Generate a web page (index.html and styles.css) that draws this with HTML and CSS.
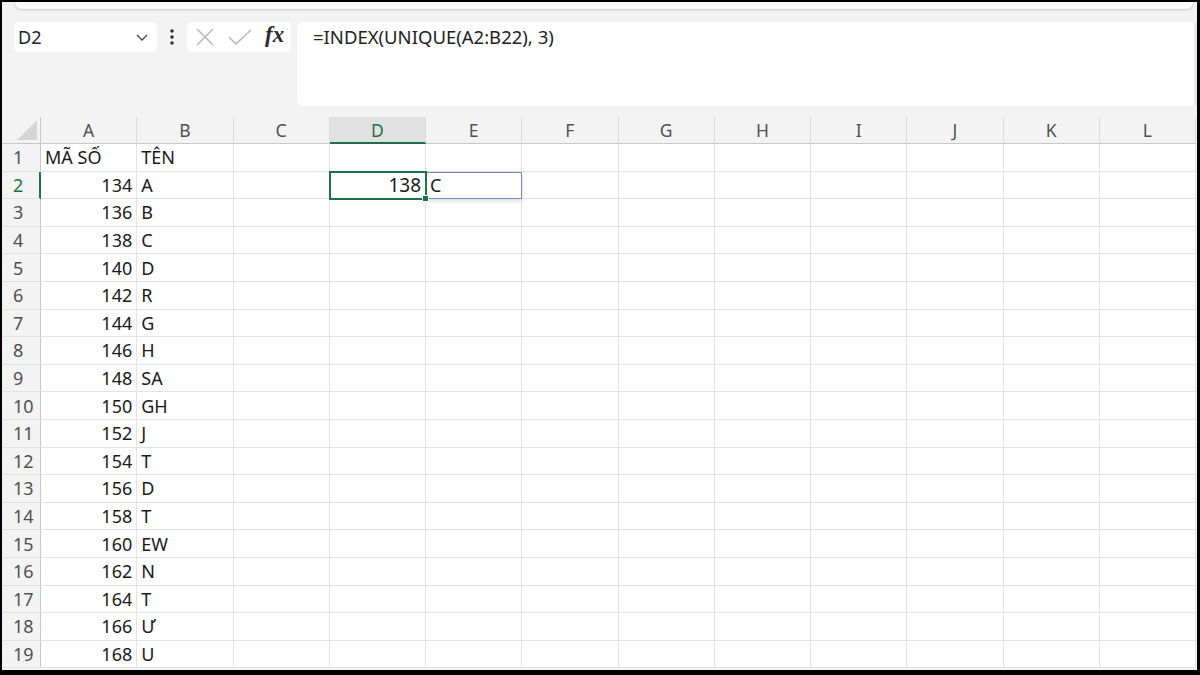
FILE: index.html
```html
<!DOCTYPE html>
<html lang="vi">
<head>
    <meta charset="UTF-8">
    <meta name="viewport" content="width=device-width, initial-scale=1.0">
    <title>Excel - INDEX UNIQUE</title>
    <link rel="stylesheet" href="styles.css">
</head>
<body>
    <div class="screen">
        <div class="app">
            <div class="searchbar"></div>

            <div class="formula-row">
                <div class="namebox">
                    <span>D2</span>
                    <svg class="chevron" width="12" height="7" viewBox="0 0 12 7">
                        <path d="M1 1 L6 6 L11 1" fill="none" stroke="#444" stroke-width="1.3"/>
                    </svg>
                </div>
                <div class="kebab">
                    <svg width="6" height="18" viewBox="0 0 6 18">
                        <circle cx="3" cy="3" r="1.8" fill="#333"/>
                        <circle cx="3" cy="9" r="1.8" fill="#333"/>
                        <circle cx="3" cy="15" r="1.8" fill="#333"/>
                    </svg>
                </div>
                <div class="fx-box">
                    <svg class="icon-x" width="18" height="18" viewBox="0 0 18 18">
                        <path d="M1 1 L17 17 M17 1 L1 17" stroke="#b4b4b4" stroke-width="1.4" fill="none"/>
                    </svg>
                    <svg class="icon-check" width="24" height="16" viewBox="0 0 24 16">
                        <path d="M1 8 L8 15 L23 1" stroke="#b4b4b4" stroke-width="1.4" fill="none"/>
                    </svg>
                    <span class="fx">fx</span>
                </div>
                <div class="formula">=INDEX(UNIQUE(A2:B22), 3)</div>
            </div>

            <div class="sheet" id="sheet">
                <div class="corner">
                    <svg width="20" height="20" viewBox="0 0 20 20">
                        <polygon points="20,0 20,20 0,20" fill="#d6d6d6"/>
                    </svg>
                </div>
            </div>
        </div>
    </div>

    <script>
let columns = ["A","B","C","D","E","F","G","H","I","J","K","L"];
let data = [
    ["MÃ SỐ", "TÊN"],
    [134, "A"], [136, "B"], [138, "C"], [140, "D"], [142, "R"],
    [144, "G"], [146, "H"], [148, "SA"], [150, "GH"], [152, "J"],
    [154, "T"], [156, "D"], [158, "T"], [160, "EW"], [162, "N"],
    [164, "T"], [166, "Ư"], [168, "U"]
];

function renderSheet() {
    let sheet = document.getElementById('sheet');

    columns.forEach(col => {
        let h = document.createElement('div');
        h.className = col === "D" ? "col-head active" : "col-head";
        h.innerText = col;
        sheet.appendChild(h);
    });

    data.forEach((row, r) => {
        let num = document.createElement('div');
        num.className = r === 1 ? "row-head active" : "row-head";
        num.innerText = r + 1;
        sheet.appendChild(num);

        columns.forEach((col, c) => {
            let cell = document.createElement('div');
            cell.className = "cell";
            let value = "";
            if (c < 2) value = row[c];
            if (r === 1 && col === "D") { value = 138; cell.classList.add("selected"); }
            if (r === 1 && col === "E") { value = "C"; cell.classList.add("spill"); }
            if (typeof value === "number") cell.classList.add("num");
            cell.innerText = value;
            sheet.appendChild(cell);
        });
    });
}

renderSheet();
    </script>
</body>
</html>
```

FILE: styles.css
```css
body {
    margin: 0;
    background-color: #000;
    font-family: "Noto Sans", "Open Sans", sans-serif;
}
.screen {
    width: 1200px;
    height: 675px;
    padding: 2px 3px 5px 2px;
    box-sizing: border-box;
    overflow: hidden;
}
.app {
    height: 100%;
    background-color: #f3f3f3;
    overflow: hidden;
}
.searchbar {
    height: 7px;
    margin: 0 4px 0 13px;
    background-color: #fbfbfb;
    border-radius: 0 0 8px 8px;
    box-shadow: 0 1px 3px rgba(0, 0, 0, 0.18);
}

/* name box + formula bar */
.formula-row {
    display: flex;
    align-items: flex-start;
    padding: 13px 0 0 12px;
}
.namebox {
    width: 143px;
    height: 30px;
    box-sizing: border-box;
    background-color: #fff;
    border-radius: 5px;
    display: flex;
    align-items: center;
    justify-content: space-between;
    padding: 0 9px 0 4px;
    font-size: 18px;
    color: #222;
}
.kebab {
    width: 30px;
    height: 30px;
    display: flex;
    align-items: center;
    justify-content: center;
}
.fx-box {
    width: 104px;
    height: 30px;
    box-sizing: border-box;
    background-color: #fff;
    border-radius: 5px;
    display: flex;
    align-items: center;
    padding: 0 6px 0 9px;
}
.icon-x {
    margin-right: 14px;
}
.icon-check {
    margin-right: 13px;
    margin-top: -1px;
}
.fx {
    font-family: "Liberation Serif", serif;
    font-style: italic;
    font-weight: bold;
    font-size: 23px;
    color: #2a2a2a;
    margin-top: -4px;
}
.formula {
    flex: 1;
    height: 84px;
    margin-left: 6px;
    background-color: #fff;
    border-radius: 6px 0 0 6px;
    border-right: 3px solid #e9e9e9;
    box-sizing: border-box;
    padding: 2px 16px;
    font-size: 18.5px;
    color: #222;
}

/* grid */
.sheet {
    display: grid;
    grid-template-columns: 39px repeat(12, 96.25px);
    grid-template-rows: 27px repeat(19, 27.6px);
    margin-top: 11px;
    font-size: 18px;
    color: #1a1a1a;
}
.corner {
    display: flex;
    align-items: flex-end;
    justify-content: flex-end;
    padding: 0 3px 3px 0;
    border-bottom: 1px solid #c8c8c8;
    border-right: 1px solid #c8c8c8;
}
.col-head {
    display: flex;
    align-items: center;
    justify-content: center;
    color: #505050;
    font-size: 17.5px;
    border-right: 1px solid #dcdcdc;
    border-bottom: 1px solid #c8c8c8;
}
.col-head.active {
    background-color: #e1e1e1;
    color: #1e7145;
    border-bottom: 2px solid #1e7145;
}
.row-head {
    display: flex;
    align-items: center;
    padding-left: 11px;
    color: #505050;
    border-right: 1px solid #c8c8c8;
    border-bottom: 1px solid #e4e4e4;
}
.row-head.active {
    color: #1e7145;
    border-right: 2px solid #1e7145;
}
.cell {
    background-color: #fff;
    border-right: 1px solid #e3e3e3;
    border-bottom: 1px solid #e3e3e3;
    display: flex;
    align-items: center;
    padding: 0 4px;
    white-space: nowrap;
    overflow: hidden;
}
.cell.num {
    justify-content: flex-end;
}
.cell.selected {
    position: relative;
    z-index: 2;
    overflow: visible;
    font-size: 19px;
    outline: 2px solid #1e7145;
    outline-offset: -1px;
}
.cell.selected::after {
    content: "";
    position: absolute;
    right: -4px;
    bottom: -4px;
    width: 5px;
    height: 5px;
    background-color: #1e7145;
    border: 1px solid #fff;
}
.cell.spill {
    position: relative;
    z-index: 1;
    outline: 1px solid #6f8fc4;
    outline-offset: -1px;
    box-shadow: 0 2px 5px rgba(0, 0, 0, 0.15);
}
```
